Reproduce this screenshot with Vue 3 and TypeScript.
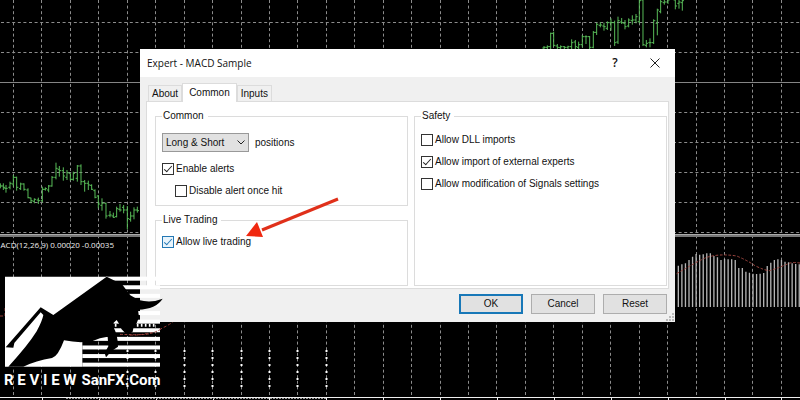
<script setup lang="ts">
import { ref } from 'vue'

const tabs = ['About', 'Common', 'Inputs']
const activeTab = ref('Common')
const direction = ref('Long & Short')
const enableAlerts = ref(true)
const disableAfterHit = ref(false)
const liveTrading = ref(true)

const safety = ref([
  { id: 'dll', label: 'Allow DLL imports', on: false },
  { id: 'experts', label: 'Allow import of external experts', on: true },
  { id: 'signals', label: 'Allow modification of Signals settings', on: false },
])

const columns = Array.from({ length: 28 }, (_, i) => Math.round(13 + i * 28.44) + 0.5)
const rows = [22.5, 52.5, 112.5, 142.5, 172.5, 202.5, 232.5]
const brightColumns = columns.slice(4, 12)

// Price bars: x, high, low, open, close in thirds of a pixel.
type Bar = [number, number, number, number, number]
const leftBars: Bar[] = [
  [1, 160, 175, 165, 168], [10, 160, 180, 168, 172], [18, 165, 188, 175, 175], [30, 155, 178, 172, 160],
  [40, 135, 170, 162, 142], [50, 140, 182, 142, 172], [62, 158, 180, 176, 162], [72, 160, 182, 162, 178],
  [84, 175, 205, 180, 203], [93, 203, 220, 204, 212], [103, 205, 220, 214, 208], [115, 203, 222, 210, 212],
  [127, 170, 217, 212, 178], [136, 172, 182, 178, 176], [146, 165, 187, 180, 168], [156, 138, 170, 168, 142],
  [168, 98, 148, 142, 115], [178, 108, 140, 118, 122], [190, 112, 152, 122, 138], [201, 120, 150, 142, 128],
  [211, 130, 152, 130, 148], [220, 125, 152, 148, 130], [232, 105, 155, 145, 108], [243, 103, 165, 108, 155],
  [254, 150, 185, 155, 160], [265, 152, 180, 160, 165], [275, 163, 180, 166, 178], [285, 178, 205, 182, 202],
  [295, 195, 235, 198, 222], [306, 205, 242, 226, 220], [318, 218, 266, 220, 258], [330, 243, 262, 256, 255],
  [340, 248, 264, 258, 262], [350, 230, 262, 260, 236], [360, 222, 245, 238, 240], [371, 225, 250, 232, 240],
  [382, 228, 298, 240, 266], [392, 245, 275, 268, 258], [402, 232, 268, 258, 240], [412, 230, 248, 240, 242],
]
const rightBars: Bar[] = [
  [42, 138, 150, 144, 142], [52, 136, 150, 142, 140], [62, 98, 150, 140, 100], [71, 95, 140, 100, 136],
  [82, 132, 150, 138, 142], [92, 136, 150, 143, 140], [103, 138, 150, 140, 142], [114, 137, 150, 142, 140],
  [125, 118, 150, 140, 128], [136, 120, 150, 126, 140], [146, 125, 150, 142, 134], [157, 105, 142, 134, 110],
  [168, 106, 132, 110, 110], [179, 108, 150, 110, 142], [190, 93, 145, 142, 97], [200, 68, 105, 97, 73],
  [211, 66, 82, 76, 75], [222, 68, 92, 78, 80], [232, 64, 90, 85, 68], [243, 55, 92, 68, 68],
  [254, 62, 138, 68, 128], [264, 50, 132, 126, 62], [275, 54, 72, 66, 68], [285, 60, 88, 70, 80],
  [296, 55, 82, 78, 60], [307, 46, 74, 62, 60], [318, 42, 70, 60, 50], [328, 0, 70, 65, 2],
  [339, 0, 138, 0, 134], [349, 120, 142, 136, 130], [360, 115, 142, 128, 128], [371, 58, 132, 128, 62],
  [382, 26, 106, 70, 30], [392, -5, 40, 35, 5], [403, -5, 14, 8, 6], [414, -5, 12, 6, 0],
  [436, -5, 28, 0, 18], [447, -5, 26, 10, 6], [457, -5, 32, 8, 2],
]
const barPath = (bars: Bar[]) =>
  bars.map(([x, h, l, o, c]) => `M${x} ${h}V${l}M${x - 5} ${o}H${x}M${x} ${c}H${x + 5}`).join('')

const tops = [197, 193, 190, 180, 170, 162, 164, 163, 160, 160, 168, 172, 180, 177, 178, 178, 180, 204,
  204, 215, 218, 221, 222, 221, 219, 198, 188, 180, 178, 180, 185, 187, 190, 192, 193]
const histogram = tops.map((y, i) => `M${55 + i * 10.67} 321V${y}`).join('')

const stripes = Array.from({ length: 11 }, (_, i) => {
  const x = i < 7 ? 318 : 247
  return { x, y: 142 + i * 25.8, width: 480 - x }
})
</script>

<template>
  <main class="desktop">
    <svg class="chart" viewBox="0 0 800 400" preserveAspectRatio="xMinYMin slice" aria-hidden="true">
      <g class="grid">
        <line v-for="x in columns" :key="x" :x1="x" :x2="x" y1="0" y2="397" />
        <line v-for="y in rows" :key="y" x1="1" x2="800" :y1="y" :y2="y" />
      </g>
      <line class="level" x1="0" x2="800" y1="82.5" y2="82.5" />
      <rect class="splitter" x="0" y="234" width="800" height="3" />
      <line class="split-edge" x1="0" x2="800" y1="234.500" y2="234.500" />
      <g class="dots">
        <line v-for="x in brightColumns" :key="x" :x1="x" :x2="x" y1="350" y2="388" />
      </g>
      <g transform="translate(0 130) scale(.3333)"><path class="price" :d="barPath(leftBars)" /></g>
      <g transform="translate(530 0) scale(.3333)"><path class="price" :d="barPath(rightBars)" /></g>
      <g transform="translate(660 200) scale(.3333)">
        <path class="histogram" :d="histogram" />
        <path class="signal" d="M50 221Q110 185 140 172Q180 160 230 168Q260 180 285 197Q315 212 330 212Q365 200 390 189Q405 186 425 190" />
      </g>
      <path class="signal-thin" d="M130 335Q152 336 173 322M0 316H5V307" />
      <text class="reading" x="114" y="248" text-anchor="end">ACD(12,26,9) 0.00020 -0.00035</text>
      <path class="axis" d="M0 397.500H800" />
      <path class="axis-ticks" d="M42.500 398V400M99.500 398V400M156.500 398V400M213.500 398V400M269.500 398V400M326.500 398V400M383.500 398V400M440.500 398V400M497.500 398V400M554.500 398V400M611.500 398V400M668.500 398V400M725.500 398V400M781.500 398V400" />
      <path class="ruler" d="M66 398.500H326" />
    </svg>

    <section class="dialog" role="dialog" aria-labelledby="dialog-title">
      <header class="titlebar">
        <h1 id="dialog-title">Expert - MACD Sample</h1>
        <button class="caption help" type="button">?</button>
        <button class="caption" type="button" aria-label="Close">
          <svg width="10" height="10" viewBox="0 0 10 10"><path d="M.5 .5L9.500 9.500M9.500 .5L.5 9.500" /></svg>
        </button>
      </header>

      <nav class="tabs" role="tablist">
        <button
          v-for="tab in tabs" :key="tab" type="button" role="tab" class="tab"
          :class="{ active: tab === activeTab }" :aria-selected="tab === activeTab" @click="activeTab = tab"
        >{{ tab }}</button>
      </nav>

      <div class="panel">
        <div class="stack">
          <fieldset class="group">
            <legend>Common</legend>
            <div class="field">
              <span class="dropdown">
                <select id="direction" v-model="direction">
                  <option>Long &amp; Short</option>
                  <option>Only Long</option>
                  <option>Only Short</option>
                </select>
                <svg width="8" height="5" viewBox="0 0 8 5"><path d="M.5 .5L4 4L7.500 .5" /></svg>
              </span>
              <label for="direction">positions</label>
            </div>
            <label class="check first"><input v-model="enableAlerts" type="checkbox">Enable alerts</label>
            <label class="check nested"><input v-model="disableAfterHit" type="checkbox">Disable alert once hit</label>
          </fieldset>
          <fieldset class="group live">
            <legend>Live Trading</legend>
            <label class="check accent"><input v-model="liveTrading" type="checkbox">Allow live trading</label>
          </fieldset>
        </div>
        <fieldset class="group safety">
          <legend>Safety</legend>
          <label v-for="item in safety" :key="item.id" class="check">
            <input v-model="item.on" type="checkbox">{{ item.label }}
          </label>
        </fieldset>
      </div>

      <footer class="actions">
        <button type="button" class="default">OK</button>
        <button type="button">Cancel</button>
        <button type="button">Reset</button>
      </footer>
      <svg class="grip" width="8" height="8" viewBox="0 0 8 8" aria-hidden="true">
        <path d="M6 0h2v2H6zM3 3h2v2H3zM6 3h2v2H6zM0 6h2v2H0zM3 6h2v2H3zM6 6h2v2H6z" />
      </svg>
    </section>

    <svg class="arrow" width="96" height="44" viewBox="0 0 96 44" aria-hidden="true">
      <path class="shaft" d="M93 4L17 35" />
      <path class="head" d="M1 41L12 27L18 42Z" />
    </svg>

    <div class="brand">
      <svg class="bull" width="160" height="92" viewBox="12 140 480 276" aria-hidden="true">
        <path fill="#fff" d="M15 142H322V300H247V412H15Z" />
        <rect v-for="s in stripes" :key="s.y" :x="s.x" :y="s.y" :width="s.width" height="12" fill="#fff" />
        <path d="M320 142L366 165L391 198L416 212Q454 222 488 208Q468 239 414 241L417 264Q411 284 400 297L398 307L382 318L372 307Q362 300 360 288L350 272L341 280L340 292Q354 318 354 352L334 366L318 384L314 371L325 351L323 322Q300 324 276 336Q235 342 192 333Q174 382 156 386Q108 394 70 412H25Q84 348 110 306Q127 274 130 257L122 249L43 341L40 355L17 354L122 234L160 257Z" />
        <path stroke="#fff" stroke-width="5" d="M347 283V292M413 283V292M425 283V292M437 283V292M449 283V292M461 283V292" />
        <path class="signal" d="M360 315Q430 318 450 313Q468 308 484 299" />
      </svg>
      <p class="wordmark"><span>R E V I E W</span><span>SanFX.Com</span></p>
    </div>
  </main>
</template>

<style>
body {
  background: #000;
}
</style>

<style scoped>
.desktop {
  position: relative;
  min-height: 100vh;
  overflow: hidden;
  background: #000;
  color: #111;
  font: 10px/14px "Liberation Sans", Arial, sans-serif;
}
.chart {
  position: absolute;
  inset: 0;
  width: 100%;
  height: 100%;
}
.grid line {
  stroke: #8c8c8c;
  stroke-width: 1;
  stroke-dasharray: 3 2.600;
}
.level { stroke: #858585; }
.splitter { fill: #777; }
.split-edge { stroke: #aaa; }
.dots line { stroke: #fff; stroke-width: 2; stroke-dasharray: 2 5; }
.price { fill: none; stroke: #58bc58; stroke-width: 3; }
.histogram { fill: none; stroke: #b4b4b4; stroke-width: 4; }
.signal { fill: none; stroke: #a04640; stroke-width: 3; stroke-dasharray: 8 5; }
.signal-thin { fill: none; stroke: #903a34; stroke-dasharray: 3 2; }
.reading { fill: #eee; font: 8px "Open Sans", sans-serif; }
.axis { stroke: #eee; stroke-width: 1; }
.axis-ticks { stroke: #eee; }
.ruler { stroke: #999; stroke-dasharray: 2 1; }

.dialog {
  position: absolute;
  top: 49px;
  right: 125px;
  left: 140px;
  background: #f0f0f0;
}
.titlebar {
  display: flex;
  align-items: center;
  height: 28px;
  padding: 0 7px;
  background: #fff;
}
h1 {
  flex: 1;
  margin: 0;
  font: 10px/14px "Open Sans", sans-serif;
}
button {
  padding: 0;
  border: 0;
  color: inherit;
  font: inherit;
}
.caption {
  display: grid;
  place-items: center;
  width: 26px;
  height: 24px;
  background: none;
}
.help {
  margin-right: 14px;
  font: 600 12px/14px "Open Sans", sans-serif;
}
.caption path,
.dropdown path {
  fill: none;
  stroke: #222;
}
.tabs {
  display: flex;
  align-items: flex-end;
  height: 24px;
  padding: 0 8px;
}
.tab {
  height: 16px;
  padding: 0 3px;
  border: 1px solid #dcdcdc;
  border-bottom: 0;
  background: #f0f0f0;
}
.tab.active {
  z-index: 1;
  height: 19px;
  margin-bottom: -1px;
  padding: 0 6px;
  background: #fff;
}
.panel {
  display: grid;
  grid-template-columns: 1fr 1fr;
  gap: 6px;
  margin: 0 6px;
  padding: 7px 1px 2px 8px;
  border: 1px solid #dcdcdc;
  background: #fff;
}
.stack {
  display: flex;
  flex-direction: column;
  gap: 7px;
}
.group {
  min-width: 0;
  margin: 0;
  padding: 10px 6px 7px;
  border: 1px solid #dcdcdc;
}
legend {
  margin: 0;
  padding: 0 4px 0 1px;
}
.live { padding: 8px 6px 36px; }
.field {
  display: flex;
  align-items: center;
  gap: 6px;
}
.dropdown {
  display: grid;
  align-items: center;
}
.dropdown > * { grid-area: 1 / 1; }
.dropdown svg {
  justify-self: end;
  margin-right: 4px;
  pointer-events: none;
}
select {
  width: 87px;
  height: 19px;
  padding: 0 3px;
  border: 1px solid #999;
  border-radius: 0;
  appearance: none;
  background: #e1e1e1;
  color: inherit;
  font: inherit;
}
.check {
  display: flex;
  align-items: center;
  gap: 2px;
  width: max-content;
}
.first { margin: 10px 0 8px; }
.nested { margin-left: 13px; }
.safety .check + .check { margin-top: 8px; }
.check input {
  display: grid;
  place-items: center;
  width: 12px;
  height: 12px;
  margin: 0;
  border: 1px solid #333;
  appearance: none;
  background: #fff;
}
.check input:checked::before {
  content: "";
  width: 7px;
  height: 3px;
  margin-top: -3px;
  border: solid #222;
  border-width: 0 0 1px 1px;
  transform: rotate(-48deg);
}
.accent input { border-color: #2478b4; background: #e8f4fc; }
.accent input:checked::before { border-color: #2478b4; }
.actions {
  display: flex;
  justify-content: flex-end;
  gap: 8px;
  padding: 5px 8px 8px;
}
.actions button {
  width: 64px;
  height: 20px;
  border: 1px solid #adadad;
  background: #e1e1e1;
}
.actions .default { border: 2px solid #1878b8; }
.grip {
  position: absolute;
  right: 1px;
  bottom: 1px;
  fill: #bbb;
}
.arrow {
  position: absolute;
  top: 195px;
  left: 245px;
  pointer-events: none;
}
.shaft { stroke: #e0301a; stroke-width: 3; }
.head { fill: #f02810; }
.brand {
  position: absolute;
  bottom: 7px;
  left: 4px;
  color: #fff;
}
.bull { display: block; }
.wordmark {
  display: flex;
  gap: 5px;
  margin: 0;
  font: bold 15px/25px Roboto, "Liberation Sans", sans-serif;
}
</style>
